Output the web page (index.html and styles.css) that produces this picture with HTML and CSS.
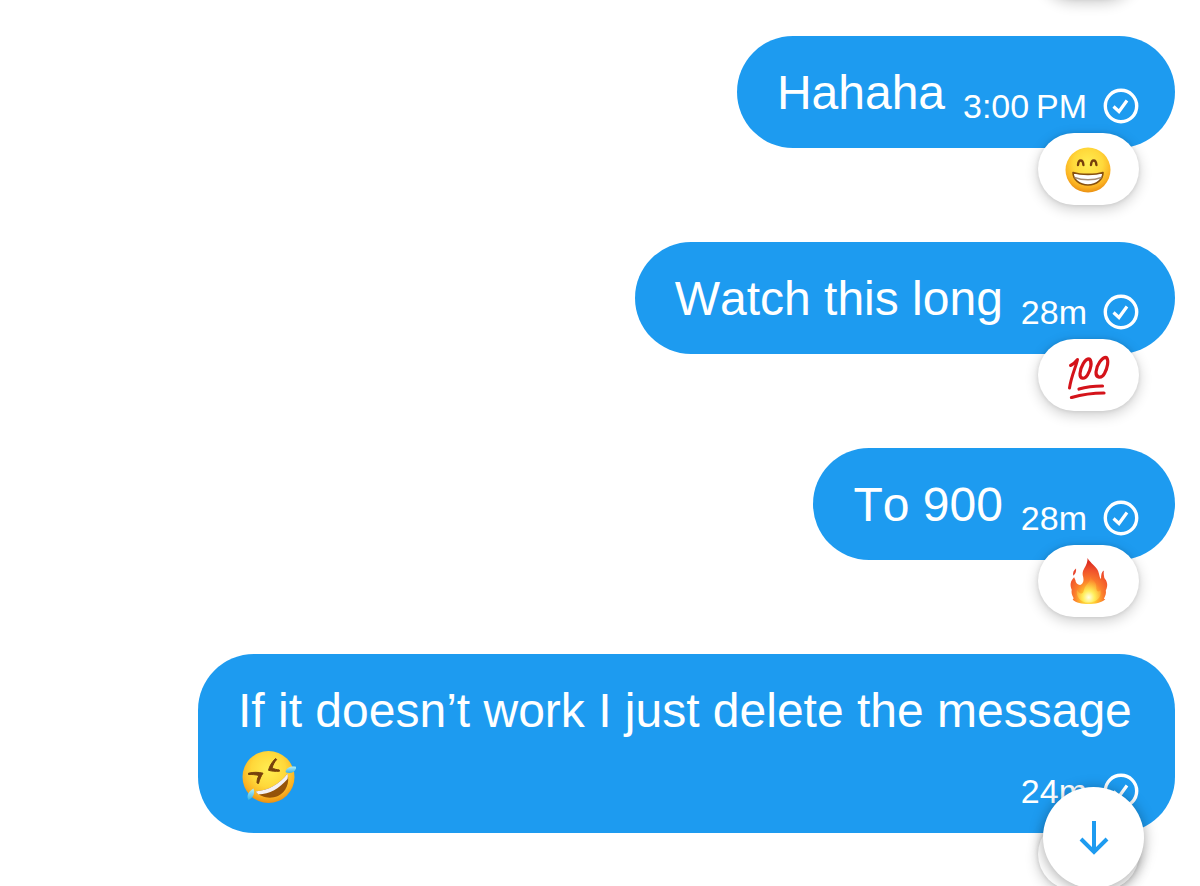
FILE: index.html
```html
<!DOCTYPE html>
<html lang="en">
<head>
    <meta charset="UTF-8">
    <meta name="viewport" content="width=device-width, initial-scale=1.0">
    <title>Messages</title>
    <link rel="stylesheet" href="styles.css">
</head>
<body>
    <!-- shared icon and gradients -->
    <svg class="defs" width="0" height="0" aria-hidden="true">
        <defs>
            <radialGradient id="face" cx="50%" cy="36%" r="66%">
                <stop offset="0" stop-color="#ffee52"/>
                <stop offset="0.5" stop-color="#ffd83a"/>
                <stop offset="0.8" stop-color="#fbb222"/>
                <stop offset="1" stop-color="#e88a10"/>
            </radialGradient>
            <linearGradient id="tear" x1="0" y1="0" x2="0" y2="1">
                <stop offset="0" stop-color="#b5f0fc"/>
                <stop offset="1" stop-color="#36b1e3"/>
            </linearGradient>
            <radialGradient id="flame" cx="50%" cy="88%" r="78%">
                <stop offset="0" stop-color="#fff36a"/>
                <stop offset="0.25" stop-color="#ffc62e"/>
                <stop offset="0.5" stop-color="#fb7e2c"/>
                <stop offset="0.8" stop-color="#f0512c"/>
                <stop offset="1" stop-color="#dc2f20"/>
            </radialGradient>
            <radialGradient id="core" cx="50%" cy="80%" r="70%">
                <stop offset="0" stop-color="#ffffe6"/>
                <stop offset="0.35" stop-color="#ffee5c"/>
                <stop offset="1" stop-color="#ffa030" stop-opacity="0.2"/>
            </radialGradient>
            <symbol id="sent" viewBox="0 0 36 36">
                <circle cx="18" cy="18" r="15.700" fill="none" stroke="currentColor" stroke-width="3.400"/>
                <path d="M10.500 18.500l5.500 5 8-11" fill="none" stroke="currentColor" stroke-width="3.200"/>
            </symbol>
        </defs>
    </svg>

    <main>
        <ul class="messages">
            <li class="message">
                <span class="reaction"></span>
            </li>
            <li class="message">
                <p class="text">Hahaha</p>
                <div class="meta">
                    <time>3:00&#8239;PM</time>
                    <svg class="sent" role="img" aria-label="Sent"><use href="#sent"/></svg>
                </div>
                <button class="reaction" type="button" aria-label="Grinning face reaction">
                    <svg class="emoji" viewBox="0 0 48 48">
                        <circle cx="23" cy="25" r="22.500" fill="url(#face)"/>
                        <path d="M13 20c.4-6 5-6 5.400 0M26 20c.4-6 5-6 5.400 0" fill="none" stroke="#77400c" stroke-width="2.400" stroke-linecap="round"/>
                        <path d="M8 27.500c8 2.500 22 2.500 30 0 0 7-6.500 12.500-15 12.500S8 34.500 8 27.500z" fill="#fff" stroke="#87500f" stroke-width="1.600" stroke-linejoin="round"/>
                        <path d="M9.500 32.500c8 3 19 3 27 0" fill="none" stroke="#a58d76" stroke-width="1.600"/>
                    </svg>
                </button>
            </li>
            <li class="message">
                <p class="text">Watch this long</p>
                <div class="meta">
                    <time>28m</time>
                    <svg class="sent" role="img" aria-label="Sent"><use href="#sent"/></svg>
                </div>
                <button class="reaction" type="button" aria-label="Hundred points reaction">
                    <svg class="emoji" viewBox="0 0 48 48" fill="none" stroke="#d4131a" stroke-linecap="round" stroke-linejoin="round">
                        <path d="M5.500 14.500C8 13.500 10.500 11 12.500 8.500 11 16 6.500 24 4.500 37" stroke-width="3"/>
                        <path d="M24.500 8c-4.500-.5-9 8-9.500 14.500-.3 5.500 4.500 6.500 7.500 1.500C25.800 18.500 27.500 11 24.500 8z" stroke-width="3.200"/>
                        <path d="M41.500 6.500C37 6 31.500 14 31 21c-.3 6 5.500 7 8.500 1.500 3-5.500 4.500-13 2-16z" stroke-width="3.200"/>
                        <path d="M14 38c8-2.400 15-3 23.500-3" stroke-width="3.200"/>
                        <path d="M6.500 46.500C17 43.500 28 42 39 42" stroke-width="3.200"/>
                    </svg>
                </button>
            </li>
            <li class="message">
                <p class="text">To 900</p>
                <div class="meta">
                    <time>28m</time>
                    <svg class="sent" role="img" aria-label="Sent"><use href="#sent"/></svg>
                </div>
                <button class="reaction" type="button" aria-label="Fire reaction">
                    <svg class="emoji" viewBox="0 0 48 50">
                        <path d="M22.500 1C22.500 5 21.500 8 19 12c-2 3.500-2 6-1 9 .8 3.500 0 6.500-2.500 8-3 .5-5.500-2-5.500-4.500L8.500 21C4.500 25 4 29 6 34c-.5 3 0 5 2 9l-1 1.500c3.500 3 9.500 4.500 16.500 4.500s13.500-1.500 17.500-5l-1.500-.5c2-3.500 2.500-6 2-8.500 3-6 1-10-1.500-13-.5-3-1-5.500-.5-8-2.500 1.500-3 4.500-3 9-1.500-1-1.500-4.500-3-8.500C31.500 9.500 25.500 6.500 22.500 1z" fill="url(#flame)"/>
                        <path d="M10.500 12C8 14 7 16 7.500 19.500c2.500-2 3.300-4 3-7.500z" fill="#e8452e"/>
                        <path d="M25 20c1.500 6-4.500 8-6 13.500-.8 2.500-1 4-2.500 4.500-2.500.5-4-2-5-4-1.500 6.500 3 13.500 12 13.500s14-6 12.500-13c-1.500 2-3.500 2-4 0-.8-2.500 0-4.500-1-7-1.200-3-4.500-4-6-7.500z" fill="url(#core)"/>
                    </svg>
                </button>
            </li>
            <li class="message long">
                <p class="text">If it doesn’t work I just delete the message
                    <svg class="emoji inline" viewBox="0 0 54 54" role="img" aria-label="Rolling on the floor laughing">
                        <circle cx="26.500" cy="27" r="26" fill="url(#face)"/>
                        <path d="M6.500 23.200c5-1.200 9.500-1.200 14.500 0-2 2.800-3.500 6.300-4.500 10.300l-1.500-.5c0-3 .5-5 2-7.500-3.500-.8-7-1.200-10.500-1z" fill="#77400c" stroke="#77400c" stroke-linejoin="round"/>
                        <path d="M33.500 8.500c-3.500 3.500-6 7.500-7 11.800 3.500.9 7 1.300 11 .9l-.3-1.300c-3-.3-5-.8-7-2 .8-3.400 2.300-6 4.500-8.400z" fill="#77400c" stroke="#77400c" stroke-linejoin="round"/>
                        <path d="M13.500 41.500C26 40.500 38 34 45.500 23.500 48 33 44 42 36 46c-8 3.500-17 1.500-22.500-4.500z" fill="#955309"/>
                        <path d="M13.500 41.500C26 40.500 38 34 45.500 23.500c.5 2 .5 3.500 0 5.500C37.500 38.500 27.500 44 16.500 44.500z" fill="#f4f1f6"/>
                        <path d="M43.500 21C45.500 17 49 15.500 54.500 17c-1 5-5.500 7-10.500 5.500z" fill="url(#tear)"/>
                        <path d="M11.500 38.500c1.500 4.500.5 8.500-5 11.500-2-3-1-7.500 3.500-10.500z" fill="url(#tear)"/>
                    </svg>
                </p>
                <div class="meta">
                    <time>24m</time>
                    <svg class="sent" role="img" aria-label="Sent"><use href="#sent"/></svg>
                </div>
                <span class="reaction"></span>
            </li>
        </ul>
        <button class="scroll-down" type="button" aria-label="Scroll to latest message">
            <svg viewBox="0 0 32 36">
                <path d="M16 1v31M3 19l13 13 13-13" fill="none" stroke="currentColor" stroke-width="4"/>
            </svg>
        </button>
    </main>
</body>
</html>
```
FILE: styles.css
```css
* {
    box-sizing: border-box;
}
body {
    font-family: "Liberation Sans", Arial, sans-serif;
    margin: 0;
    background-color: #fff;
    overflow: hidden;
}
.defs {
    position: absolute;
}
.messages {
    display: flex;
    flex-direction: column;
    align-items: flex-end;
    justify-content: flex-end;
    gap: 94px;
    height: 100vh;
    margin: 0;
    padding: 0 25px 53px;
    list-style: none;
    overflow: hidden;
}
.message {
    position: relative;
    display: flex;
    flex-shrink: 0;
    align-items: flex-end;
    gap: 18px;
    min-width: 172px;
    min-height: 112px;
    max-width: 85%;
    padding: 23px 36px 22px 40px;
    border-radius: 56px;
    background-color: #1d9bf0;
    color: #fff;
}
.text {
    margin: 0;
    font-size: 48px;
    font-kerning: none;
    line-height: 67px;
}
.meta {
    display: flex;
    align-items: center;
    gap: 16px;
    padding-bottom: 2px;
    font-size: 34px;
    line-height: 36px;
    white-space: nowrap;
}
.sent {
    width: 36px;
    height: 36px;
}
/* time sits on the last line of the text */
.long {
    display: grid;
    width: 977px;
}
.long .text,
.long .meta {
    grid-area: 1 / 1;
}
.long .meta {
    justify-self: end;
}
.reaction {
    position: absolute;
    right: 36px;
    bottom: -57px;
    display: flex;
    align-items: center;
    justify-content: center;
    width: 101px;
    height: 72px;
    padding: 0;
    border: none;
    border-radius: 36px;
    background-color: #fff;
    box-shadow: 0 4px 14px rgba(0, 0, 0, 0.2), 0 0 4px rgba(0, 0, 0, 0.1);
    cursor: pointer;
}
.emoji {
    width: 48px;
    height: 48px;
}
.emoji.inline {
    width: 54px;
    height: 54px;
    margin-left: 4px;
    vertical-align: -10px;
}
.scroll-down {
    position: fixed;
    right: 56px;
    bottom: -2px;
    display: flex;
    align-items: center;
    justify-content: center;
    width: 101px;
    height: 101px;
    padding: 0;
    border: none;
    border-radius: 50%;
    background-color: #fff;
    color: #1d9bf0;
    box-shadow: 0 2px 14px rgba(0, 0, 0, 0.35);
    cursor: pointer;
}
.scroll-down svg {
    width: 32px;
    height: 36px;
}
```
